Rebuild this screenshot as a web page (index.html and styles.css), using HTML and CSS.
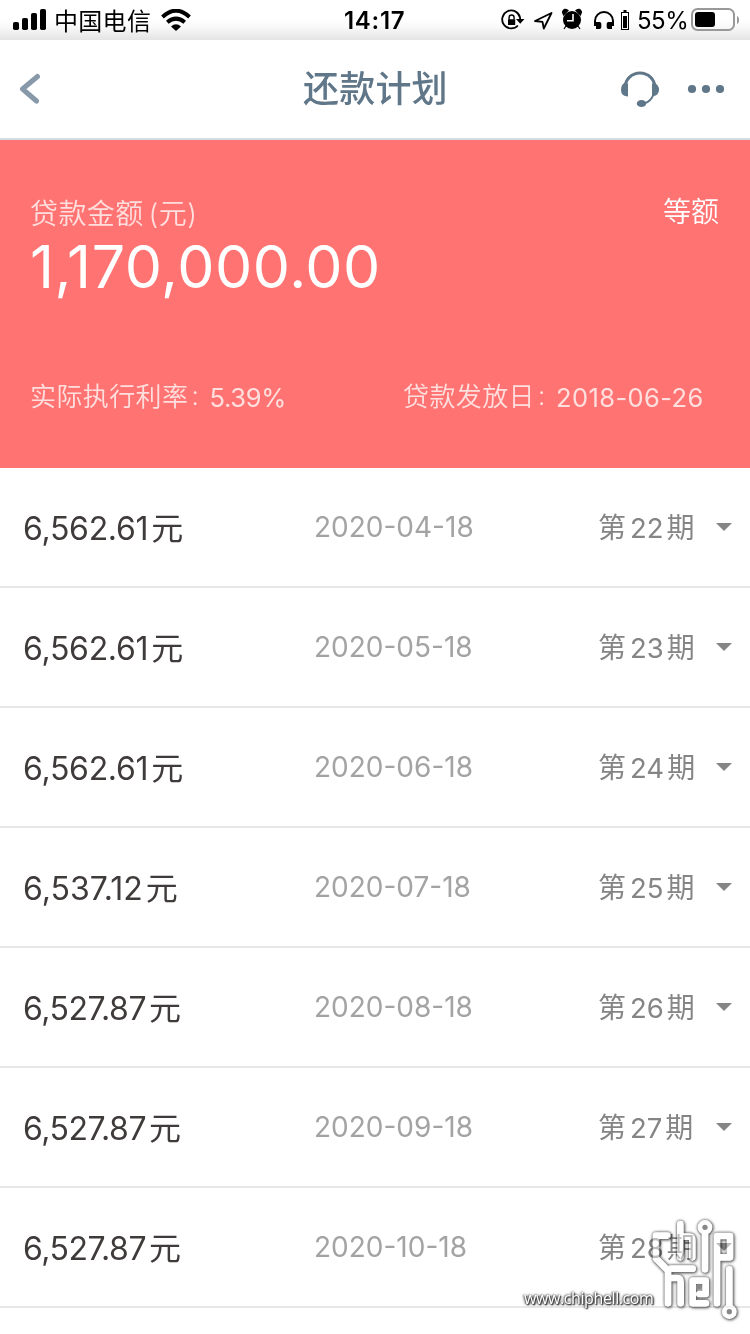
FILE: index.html
```html
<!DOCTYPE html>
<html lang="zh-CN">
<head>
<meta charset="utf-8">
<title>还款计划</title>
<link rel="stylesheet" href="styles.css">
</head>
<body>
<div class="status">
  <svg class="signal" width="34" height="22" viewBox="0 0 34 22"><rect x="0" y="13" width="6" height="8" rx="1.8"/><rect x="9" y="9" width="6" height="12" rx="1.8"/><rect x="18" y="4" width="6" height="17" rx="1.8"/><rect x="27" y="0" width="6" height="21" rx="1.8"/></svg>
  <span class="carrier">中国电信</span>
  <svg class="wifi" width="30" height="23" viewBox="0 0 30 23"><path d="M1.500 8Q15-4.500 28.500 8" fill="none" stroke="#000" stroke-width="4"/><path d="M6.300 13.300Q15 6 23.700 13.300" fill="none" stroke="#000" stroke-width="4"/><path d="M10 17.500Q15 13 20 17.500L15 22Z"/></svg>
  <span class="time">14:17</span>
  <svg class="status-icons" width="130" height="24" viewBox="0 0 130 24">
    <g fill="none" stroke="#000" stroke-width="1.800">
      <path d="M17.900 17.500A9 9 0 1 1 20 9.500L20.200 12"/>
      <path d="M9.100 11.500V9.500a2.500 2.500 0 0 1 5 0V11.500" stroke-width="1.400"/>
      <path d="M35 13L51.500 5L43.800 20.500L42.500 13.800Z" stroke-linejoin="round"/>
      <path d="M95 18V13a9 9 0 0 1 18 0V18" stroke-width="2"/>
    </g>
    <path d="M8 11.300h7.200v5.700H8zM16 11h8.500l-4.300 4.800zM96 14h3.500q1.800 0 1.800 1.800v3.400q0 1.800-1.800 1.800H96zM112 14h-3.500q-1.800 0-1.800 1.800v3.400q0 1.800 1.800 1.800h3.500z"/>
    <circle cx="72" cy="12" r="9"/><path d="M63.500 7l4.500-4.500q-4-3-5.500 1.500zM80.500 7l-4.500-4.500q4-3 5.500 1.500zM66 18l-2 3M78 18l2 3" stroke="#000" stroke-width="1.200"/><path d="M73 6v6.800H67" fill="none" stroke="#fff" stroke-width="1.600"/>
    <rect x="121.500" y="4.500" width="7" height="17" fill="none" stroke="#000"/><path d="M123.500 2h3v2h-3zM123 8h4v12h-4z"/>
  </svg>
  <span class="percent">55%</span>
  <svg class="battery" width="48" height="24" viewBox="0 0 48 24"><rect x="1" y="1" width="42" height="21" rx="5.500" fill="none" stroke="#999" stroke-width="2"/><rect x="4" y="4" width="20" height="15" rx="3"/><path d="M46 8q2 .5 2 4t-2 4z" fill="#999"/></svg>
</div>
<header class="nav">
  <svg class="back" width="24" height="34" viewBox="0 0 24 34"><path d="M18.500 4.500L3.500 17L17.500 29" fill="none" stroke="#8799a8" stroke-width="5" stroke-linecap="round" stroke-linejoin="round"/></svg>
  <h1 class="title">还款计划</h1>
  <svg class="service" width="40" height="38" viewBox="0 0 40 38"><path d="M5.200 17A14.800 14 0 0 1 34.800 17" fill="none" stroke="#607789" stroke-width="3"/><path d="M8 13.500V26.500Q1 26 1 20T5 13zM32 13.500V26.500Q39 25.500 39 20T34 13z" fill="#607789"/><path d="M34 23Q31 32 24 33.500" fill="none" stroke="#607789" stroke-width="2"/><ellipse cx="21.500" cy="33.500" rx="4.700" ry="3.600" fill="#607789"/></svg>
  <svg class="more" width="38" height="10" viewBox="0 0 38 10" fill="#607789"><circle cx="5" cy="5" r="4.100"/><circle cx="19" cy="5" r="4.100"/><circle cx="33" cy="5" r="4.100"/></svg>
</header>
<section class="summary">
  <div class="summary-top"><span class="label">贷款金额<span class="unit">(元)</span></span><span class="method">等额</span></div>
  <div class="total">1,170,000.00</div>
  <div class="details"><span class="detail rate">实际执行利率<i class="colon">:</i><b class="percentage">5.39%</b></span><span class="detail issued">贷款发放日<i class="colon">:</i><b>2018-06-26</b></span></div>
</section>
<main class="list">
  <div class="row"><span class="amount">6,562.61<i>元</i></span><span class="date">2020-04-18</span><span class="term">第<b>22</b>期</span><span class="arrow"></span></div>
  <div class="row"><span class="amount">6,562.61<i>元</i></span><span class="date">2020-05-18</span><span class="term">第<b>23</b>期</span><span class="arrow"></span></div>
  <div class="row"><span class="amount">6,562.61<i>元</i></span><span class="date">2020-06-18</span><span class="term">第<b>24</b>期</span><span class="arrow"></span></div>
  <div class="row"><span class="amount twelve">6,537.12<i>元</i></span><span class="date">2020-07-18</span><span class="term">第<b>25</b>期</span><span class="arrow"></span></div>
  <div class="row"><span class="amount sevens">6,527.87<i>元</i></span><span class="date">2020-08-18</span><span class="term">第<b>26</b>期</span><span class="arrow"></span></div>
  <div class="row"><span class="amount sevens">6,527.87<i>元</i></span><span class="date">2020-09-18</span><span class="term">第<b>27</b>期</span><span class="arrow"></span></div>
  <div class="row"><span class="amount sevens">6,527.87<i>元</i></span><span class="date">2020-10-18</span><span class="term">第<b>28</b>期</span><span class="arrow"></span></div>
</main>
<div class="site">www.chiphell.com</div>
<svg class="mark mark-shadow" width="110" height="124" viewBox="0 0 330 372">
  <g class="mark-lines" id="lines">
    <path d="M82 77H48V145L84 182V280M84 182Q86 176 96 176H158M96 204H112Q122 204 122 218V280"/>
    <path d="M121 42V142M121 80H148Q157 80 157 90V142"/>
    <path d="M195 70V178M231 280V78H270V142H243"/>
    <path d="M178 252H197V212H158V280H198"/>
    <path d="M268 178V288"/>
    <circle cx="195" cy="52" r="12"/><circle cx="268" cy="305" r="12"/>
  </g>
</svg>
<svg class="mark" width="110" height="124" viewBox="0 0 330 372">
  <use href="#lines" opacity=".45"/>
  <g fill="#888"><circle cx="195" cy="52" r="8"/><circle cx="268" cy="305" r="8"/><circle cx="177" cy="230" r="9"/></g>
</svg>
</body>
</html>
```
FILE: styles.css
```css
* { box-sizing: border-box; }
body { margin: 0; width: 750px; height: 1334px; overflow: hidden; position: relative; background: #fff; font-family: Inter, "Noto Sans CJK SC", sans-serif; }
i, b { font-style: normal; font-weight: inherit; }
svg { display: block; flex: none; }
span { white-space: nowrap; }
.status { height: 40px; display: flex; align-items: flex-start; padding-left: 13px; background: linear-gradient(#fff 45%, #fafafa 65%, #e4e4e4); }
.signal { margin-top: 9px; }
.carrier { margin-left: 7px; width: 98px; font-size: 24px; line-height: 39px; letter-spacing: .3px; font-family: "Noto Sans CJK SC", sans-serif; }
.wifi { margin: 9px 0 0 9px; }
.time { margin-left: 153px; width: 66px; font-size: 24px; line-height: 42px; font-weight: 600; letter-spacing: .7px; }
.status-icons { margin: 8px 0 0 90px; }
.percent { margin-left: 7px; width: 50px; font-size: 24px; line-height: 42px; letter-spacing: -.5px; }
.battery { margin: 8px 0 0 4px; }
.nav { height: 100px; display: flex; align-items: center; border-bottom: 2px solid #d3dde3; padding-left: 19px; }
.title { margin: 0 0 0 260px; width: 145px; color: #607789; font-size: 36px; font-weight: 500; letter-spacing: .2px; line-height: 54px; white-space: nowrap; }
.service { margin-left: 172px; }
.more { margin-left: 27px; }
.summary { height: 328px; background: #ff7472; color: #fff; padding: 52px 31px 0 30px; }
.summary-top { display: flex; justify-content: space-between; height: 42px; line-height: 40px; font-size: 28px; }
.label { opacity: .77; line-height: 44px; font-weight: 350; letter-spacing: .4px; }
.method { font-weight: 350; }
.unit { margin-left: 5px; }
.total { font-size: 59px; line-height: 66px; height: 142px; font-weight: 370; letter-spacing: .6px; }
.details { display: flex; height: 40px; font-size: 26px; line-height: 42px; color: rgba(255,255,255,.77); font-weight: 350; letter-spacing: .4px; }
.rate { width: 373px; }
.detail { display: flex; }
.detail b { line-height: 44px; font-size: 25.5px; font-weight: 400; letter-spacing: .4px; }
.detail .percentage { letter-spacing: -.3px; }
.colon { width: 21px; padding-left: 3px; line-height: 40px; }
.row { height: 120px; border-bottom: 2px solid #e7e7e7; padding: 0 18px 0 23px; display: flex; align-items: center; }
.amount { width: 291px; margin-top: -2px; font-size: 32px; color: #403b3b; letter-spacing: -.3px; }
.twelve { letter-spacing: 0; }
.sevens { letter-spacing: -.5px; }
.amount i { margin-left: 3px; }
.date { width: 284px; color: #a3a3a3; font-size: 28px; letter-spacing: 0; }
.term { margin-top: -2px; color: #858585; font-size: 28px; font-weight: 370; }
.term b { margin: 0 3px 0 4px; font-size: 27.5px; }
.arrow { margin-left: auto; border: 8px solid transparent; border-top-color: #858585; border-bottom: 0; }
.site { position: absolute; left: 524px; top: 1286px; font: 16px/24px "Open Sans", sans-serif; letter-spacing: -.4px; color: #fff; white-space: nowrap; text-shadow: 1px 1px 2px #333, -1px 0 2px #555, 0 0 3px #555, 1px 1px 1px #555; }
.mark { position: absolute; left: 640px; top: 1210px; }
.mark-shadow { mix-blend-mode: multiply; filter: drop-shadow(0 0 1.5px #444) drop-shadow(1px 1px 1px #888); }
.mark-lines { fill: none; stroke: #fff; stroke-width: 20; stroke-linejoin: round; stroke-linecap: round; }
```
